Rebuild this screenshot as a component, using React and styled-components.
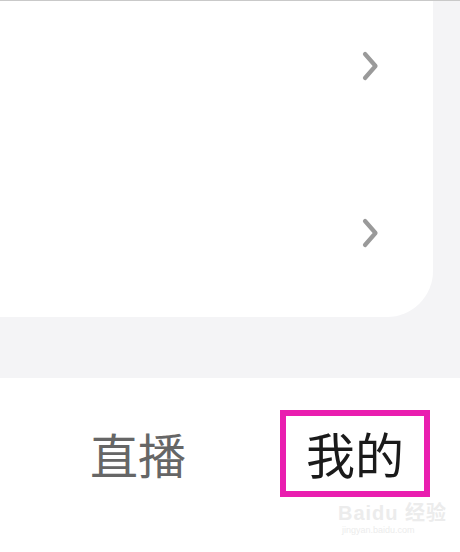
import React from "react";
import styled, { createGlobalStyle } from "styled-components";

const Global = createGlobalStyle`
  html, body { margin: 0; padding: 0; background: #ffffff; }
  body { width: 460px; height: 552px; overflow: hidden; font-family: "Noto Sans CJK SC", "Noto Sans", sans-serif; }
`;

const Screen = styled.div`
  position: relative;
  width: 460px;
  height: 552px;
  display: flex;
  flex-direction: column;
  background: #ffffff;
`;

const TopLine = styled.div`
  height: 1px;
  background: #c9c9c9;
`;

const Content = styled.div`
  height: 377px;
  background: #f4f4f6;
  display: flex;
  flex-direction: column;
`;

const Card = styled.div`
  width: 433px;
  height: 316px;
  background: #ffffff;
  border-bottom-right-radius: 46px;
  display: flex;
  flex-direction: column;
`;

const Row = styled.div`
  height: ${(p) => (p.$h ? `${p.$h}px` : "auto")};
  flex: ${(p) => (p.$h ? "none" : "1")};
  display: flex;
  justify-content: flex-end;
  align-items: flex-start;
  padding: 50px 54px 0 0;
  box-sizing: border-box;
`;

const Chevron = () => (
  <svg width="18" height="30" viewBox="0 0 18 30">
    <path d="M4 3 L14.5 15 L4 27" fill="none" stroke="#9a9a9a" strokeWidth="4.2" strokeLinecap="round" strokeLinejoin="round" />
  </svg>
);

const TabBar = styled.div`
  flex: 1;
  display: flex;
  align-items: flex-start;
  padding: 32px 0 0 90px;
  gap: 94px;
`;

const Tab = styled.div`
  font-size: 48px;
  line-height: 48px;
  color: ${(p) => (p.$active ? "#1a1a1a" : "#666666")};
  padding-top: 19px;
`;

const Highlight = styled.div`
  width: 150px;
  height: 87px;
  box-sizing: border-box;
  border: 6px solid #e91eaf;
  display: flex;
  align-items: center;
  justify-content: center;
`;

const ActiveLabel = styled.span`
  font-size: 49px;
  line-height: 49px;
  color: #1a1a1a;
  padding-bottom: 2px;
`;

const Watermark = styled.div`
  position: absolute;
  left: 338px;
  top: 502px;
  display: flex;
  flex-direction: column;
  align-items: flex-start;
  color: #ececec;
  font-family: "Liberation Sans", "Noto Sans CJK SC", sans-serif;
`;

const MarkTop = styled.div`
  font-size: 20px;
  line-height: 22px;
  font-weight: bold;
  letter-spacing: 1px;
`;

const MarkBottom = styled.div`
  font-size: 9px;
  line-height: 12px;
  padding-left: 4px;
`;

export default function App() {
  return (
    <>
      <Global />
      <Screen>
        <TopLine />
        <Content>
          <Card>
            <Row $h={167}><Chevron /></Row>
            <Row><Chevron /></Row>
          </Card>
        </Content>
        <TabBar>
          <Tab>直播</Tab>
          <Highlight>
            <ActiveLabel>我的</ActiveLabel>
          </Highlight>
        </TabBar>
        <Watermark>
          <MarkTop>Baidu 经验</MarkTop>
          <MarkBottom>jingyan.baidu.com</MarkBottom>
        </Watermark>
      </Screen>
    </>
  );
}
